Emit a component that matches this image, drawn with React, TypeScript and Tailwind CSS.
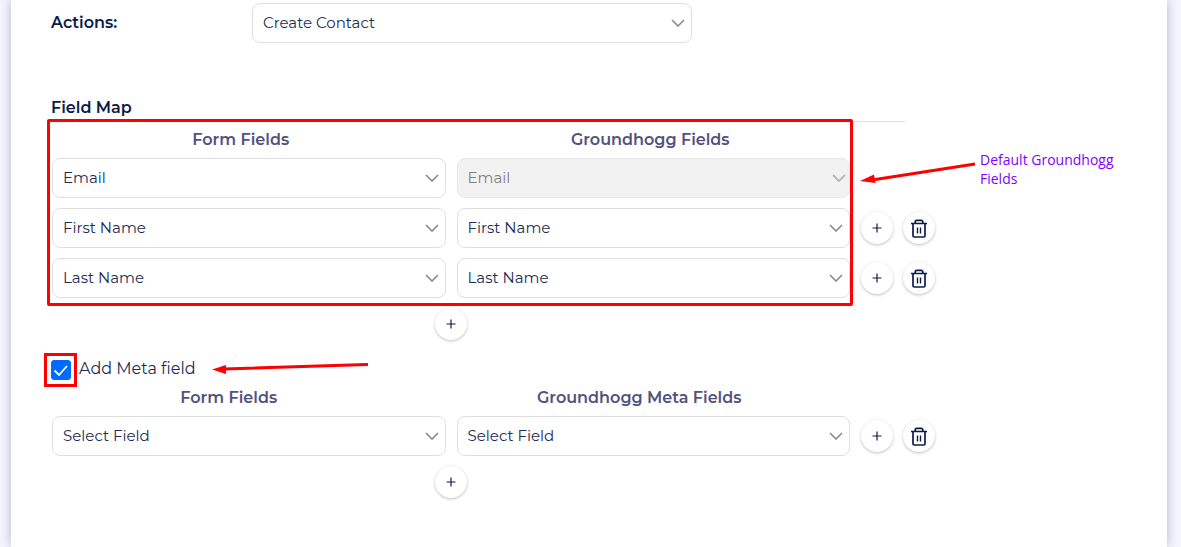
import { useState } from "react";

const FORM_OPTIONS = ["Select Field", "Email", "First Name", "Last Name"];

type SelectBoxProps = {
  label?: string;
  id?: string;
  initial: string;
  options?: string[];
  disabled?: boolean;
};

function SelectBox({ label, id, initial, options = FORM_OPTIONS, disabled = false }: SelectBoxProps) {
  const [value, setValue] = useState(initial);
  return (
    <div className="relative min-w-0">
      <select
        id={id}
        aria-label={label}
        value={value}
        disabled={disabled}
        onChange={(e) => setValue(e.target.value)}
        className="block h-10 w-full appearance-none rounded-lg border border-[#dfdfdf] bg-white pr-8 pl-2.5 text-[15px] font-normal text-[#1d2c54] disabled:border-[#e8e8e8] disabled:bg-[#f2f2f2] disabled:text-[#808080] disabled:opacity-100"
      >
        {options.map((o) => (
          <option key={o}>{o}</option>
        ))}
      </select>
      <svg
        viewBox="0 0 14 8"
        className={
          disabled
            ? "pointer-events-none absolute top-4 right-1 h-2 w-3.5 text-[#b9b9bd]"
            : "pointer-events-none absolute top-4 right-[7px] h-2 w-3.5 text-[#8a8a8a]"
        }
        fill="none"
        stroke="currentColor"
        strokeWidth={disabled ? 2 : 1.6}
        aria-hidden="true"
      >
        <path d="M1 1l6 6 6-6" />
      </svg>
    </div>
  );
}

const ROUND =
  "flex size-8 items-center justify-center rounded-full bg-white text-[#0b1c48] shadow-[0_1px_3px_rgba(0,0,0,0.26)]";

function AddButton() {
  return (
    <button type="button" aria-label="Add field" className={ROUND}>
      <svg viewBox="0 0 10 10" className="size-2.5" fill="none" stroke="currentColor" strokeWidth="1.2">
        <path d="M5 .5v9M.5 5h9" />
      </svg>
    </button>
  );
}

function DeleteButton() {
  return (
    <button type="button" aria-label="Delete field" className={ROUND}>
      <svg viewBox="0 0 18 20" className="h-5 w-[18px]" fill="none" stroke="currentColor" strokeWidth="1.7">
        <path d="M1 5.5h16M5.2 5.5V3.9a1.6 1.6 0 0 1 1.6-1.6h4.4a1.6 1.6 0 0 1 1.6 1.6v1.6M3 5.5v12.2a1.3 1.3 0 0 0 1.3 1.3h9.4a1.3 1.3 0 0 0 1.3-1.3V5.5" />
        <path d="M7.5 9.5v6M10.5 9.5v6" strokeWidth="1.4" />
      </svg>
    </button>
  );
}

type RowProps = { left: string; right: string; name: string; locked?: boolean };

function MapRow({ left, right, name, locked = false }: RowProps) {
  return (
    <div className="grid grid-cols-[1fr_1fr_74px] items-center gap-[11px]">
      <SelectBox label={`${name} form field`} initial={left} />
      <SelectBox label={`${name} Groundhogg field`} initial={right} disabled={locked} />
      {!locked && (
        <div className="flex gap-2.5">
          <AddButton />
          <DeleteButton />
        </div>
      )}
    </div>
  );
}

function AddRow() {
  return (
    <div className="mt-2.5 flex justify-center pr-[85px]">
      <AddButton />
    </div>
  );
}

const HEADER =
  "grid h-9 grid-cols-[1fr_1fr_74px] items-center gap-[11px] text-center text-base leading-6 font-semibold text-[#50527f]";

export default function App() {
  const [meta, setMeta] = useState(true);
  return (
    <div className="min-h-screen bg-[#f3f6ff] pr-3.5 pl-[11px] font-['Montserrat','Inter',sans-serif]">
      <main className="min-h-screen bg-white px-10 pt-[3px] pb-10 shadow-[0_0_10px_rgba(60,65,110,0.35)]">
        <div className="flex">
          <label htmlFor="actions" className="w-[201px] shrink-0 pt-2 text-base leading-6 font-semibold text-[#0b1c48]">
            Actions:
          </label>
          <div className="w-full max-w-[440px]">
            <SelectBox id="actions" initial="Create Contact" options={["Create Contact"]} />
          </div>
        </div>

        <h2 className="mt-[53px] max-w-[854px] border-b border-[#dfdfdf] pb-px text-base leading-6 font-semibold text-[#0b1c48]">
          Field Map
        </h2>

        <section className="ml-px max-w-[883px]">
          <div className="relative">
            <div className={HEADER}>
              <span className="pr-4">Form Fields</span>
              <span className="pr-1.5">Groundhogg Fields</span>
            </div>
            <div className="flex flex-col gap-2.5">
              <MapRow name="Email" left="Email" right="Email" locked />
              <MapRow name="First name" left="First Name" right="First Name" />
              <MapRow name="Last name" left="Last Name" right="Last Name" />
            </div>
            <div className="pointer-events-none absolute -top-[3px] right-[82px] -bottom-2 -left-[5px] rounded-xs border-3 border-[#ff0000]" />
            <div className="pointer-events-none absolute top-7 left-full -ml-[75px] flex w-[260px]">
              <svg viewBox="0 0 116 36" className="mt-2 h-9 w-[116px] shrink-0" aria-hidden="true">
                <path d="M12 22L115 6" stroke="#ff0000" strokeWidth="3" />
                <path d="M0 23L14 16.5L15.5 25z" fill="#ff0000" />
              </svg>
              <p className="ml-1 font-['Open_Sans',sans-serif] text-sm leading-[19px] text-[#8000ff]">
                Default Groundhogg
                <br />
                Fields
              </p>
            </div>
          </div>
          <AddRow />

          <div className="mt-5 flex h-5 items-start">
            <div className="relative -ml-px size-5 shrink-0">
              <input
                id="meta"
                type="checkbox"
                checked={meta}
                onChange={(e) => setMeta(e.target.checked)}
                className="block size-5 appearance-none rounded-[3px] border border-[#006bff] checked:bg-[#006bff]"
              />
              {meta && (
                <svg
                  viewBox="0 0 20 20"
                  className="pointer-events-none absolute inset-0 size-5"
                  fill="none"
                  stroke="#ffffff"
                  strokeWidth="1.8"
                  aria-hidden="true"
                >
                  <path d="M3.5 10.5l4.5 4.5 8-9" />
                </svg>
              )}
              <div className="pointer-events-none absolute -inset-y-[7px] -right-1.5 -left-[7px] border-3 border-[#ff0000]" />
            </div>
            <label htmlFor="meta" className="ml-2 text-base leading-[18px] font-normal text-[#1d2c54]">
              Add Meta field
            </label>
            <svg viewBox="0 0 156 14" className="ml-4 h-3.5 w-[156px] shrink-0" aria-hidden="true">
              <path d="M12 9L155 4.5" stroke="#ff0000" strokeWidth="3" strokeLinecap="round" />
              <path d="M0 9.5L14 5V14z" fill="#ff0000" />
            </svg>
          </div>

          {meta && (
            <div>
              <div className={HEADER}>
                <span className="pr-10">Form Fields</span>
                <span className="pr-7">Groundhogg Meta Fields</span>
              </div>
              <MapRow name="Meta" left="Select Field" right="Select Field" />
              <AddRow />
            </div>
          )}
        </section>
      </main>
    </div>
  );
}
